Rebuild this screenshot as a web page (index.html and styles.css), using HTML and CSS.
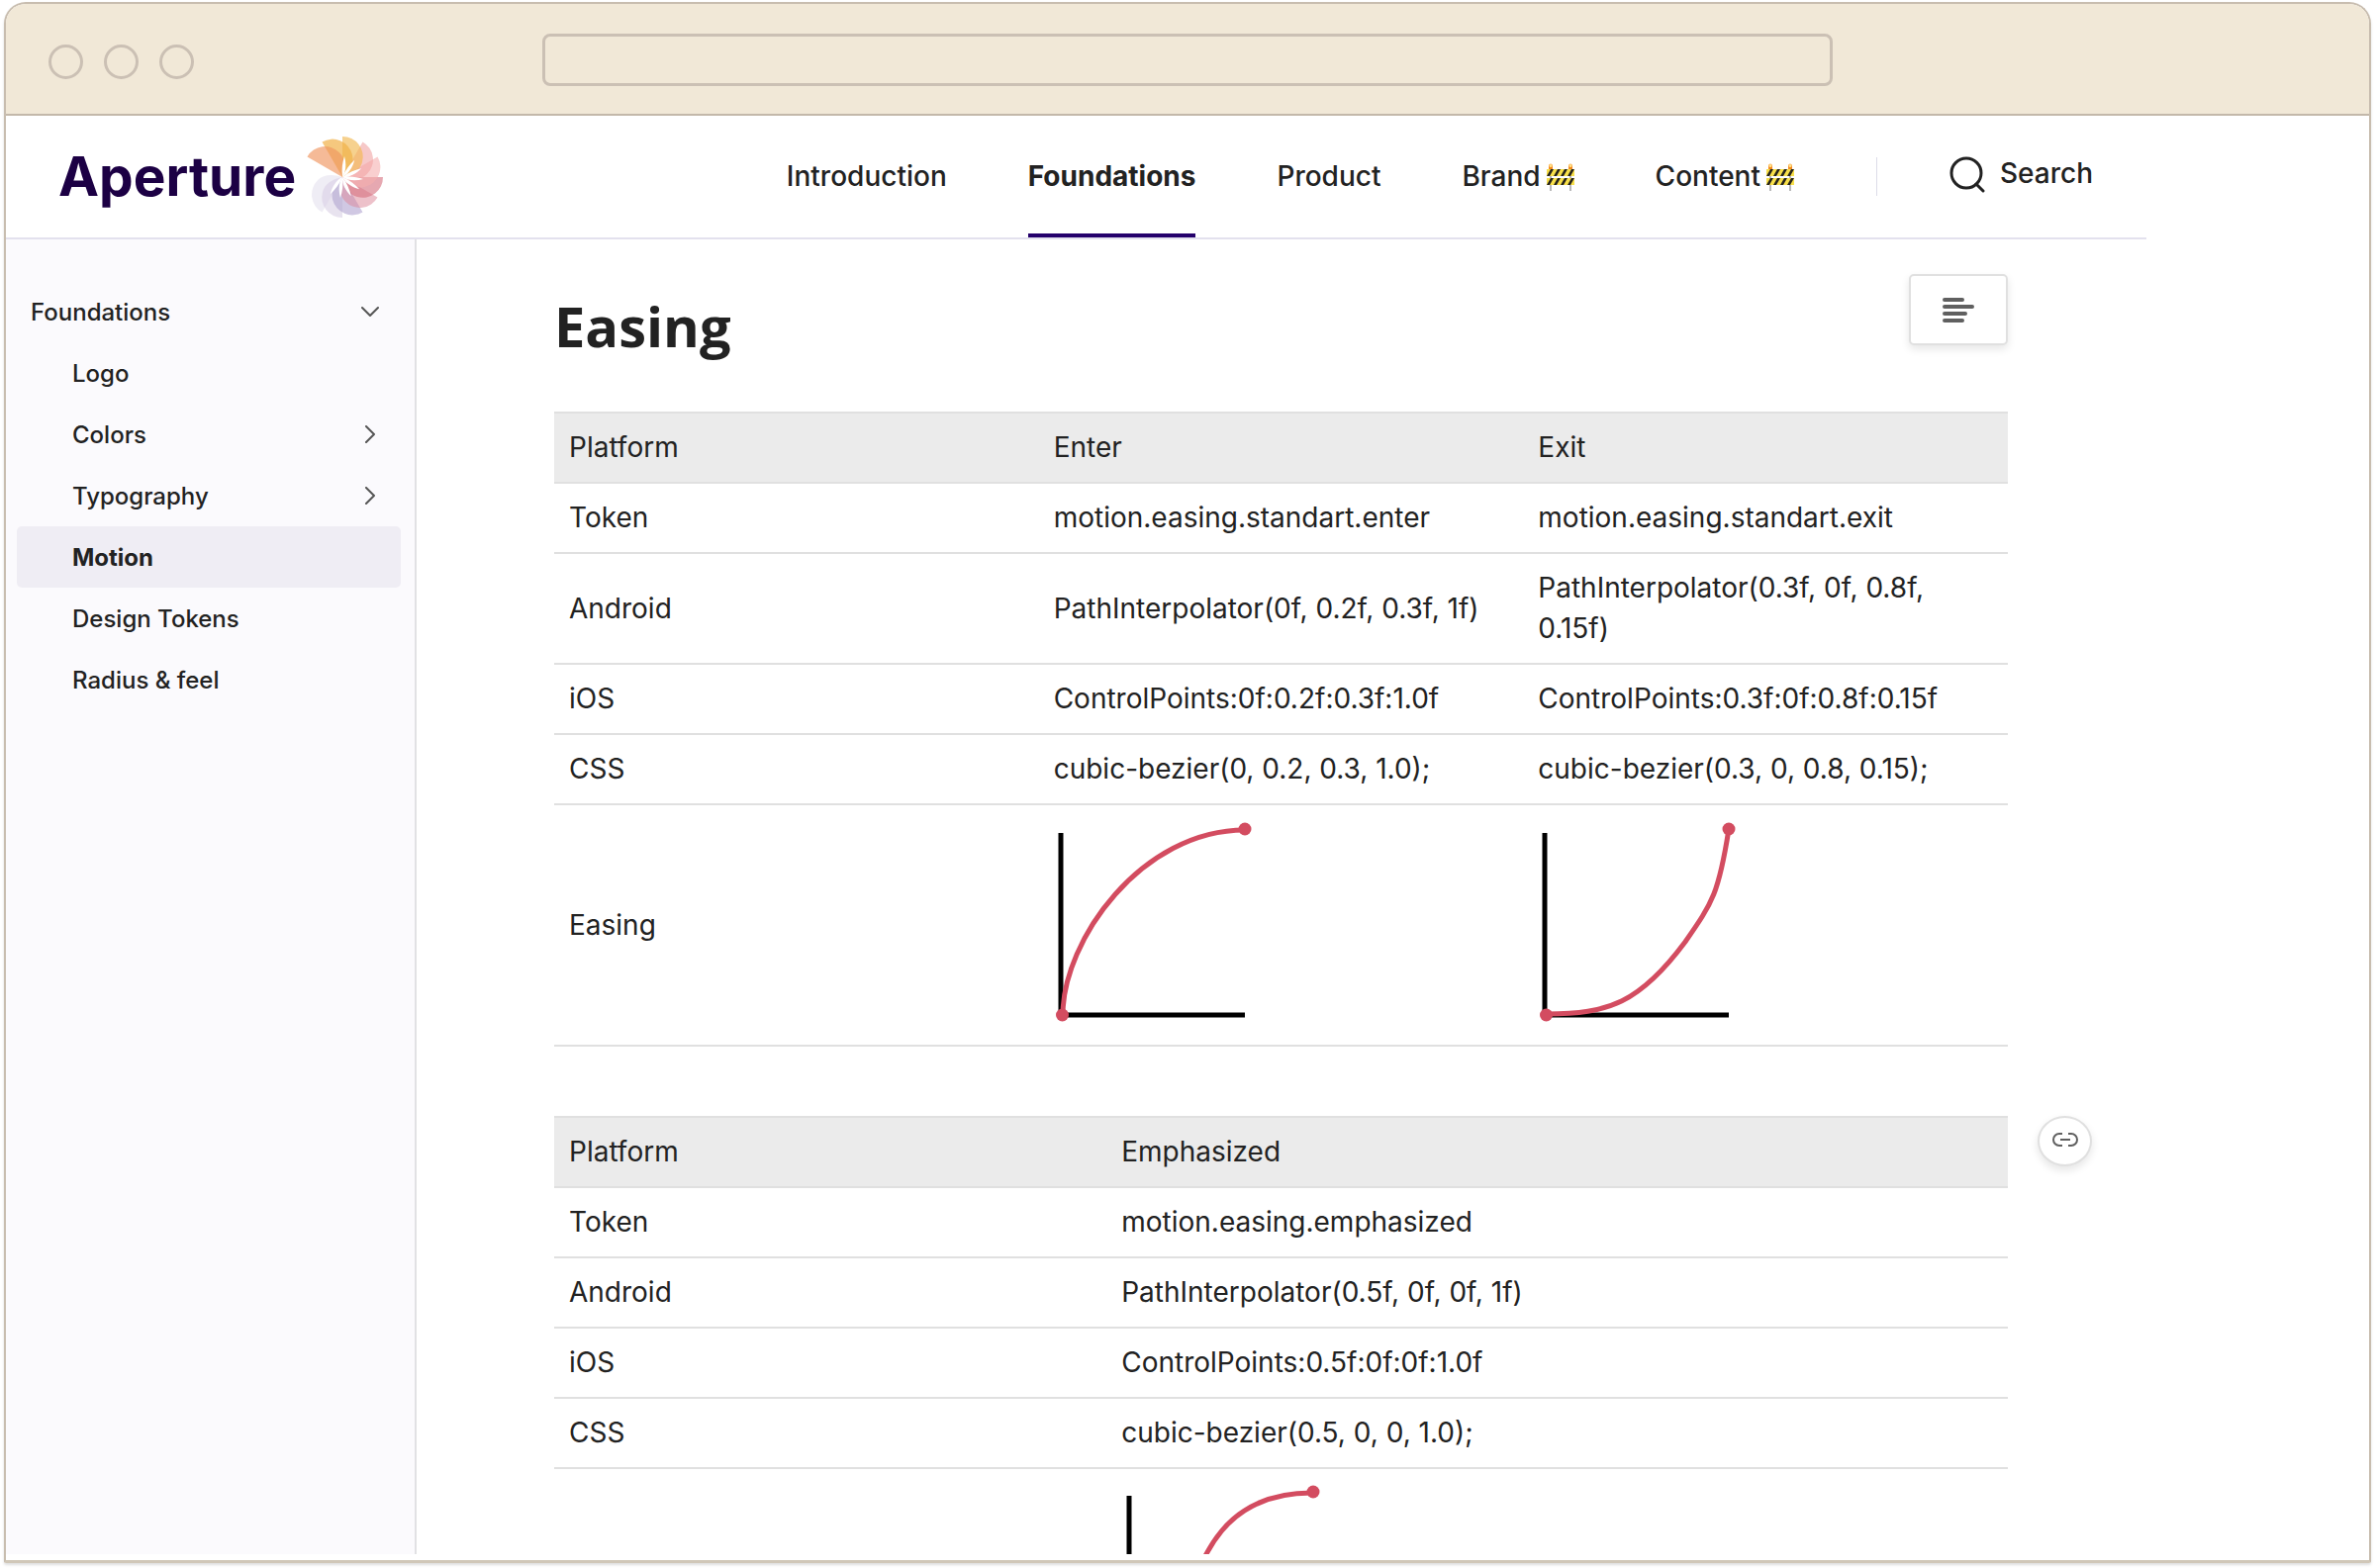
FILE: index.html
```html
<!DOCTYPE html>
<html lang="en">
<head>
<meta charset="utf-8">
<title>Aperture – Motion</title>
<link rel="stylesheet" href="styles.css">
</head>
<body>
<svg class="defs" aria-hidden="true">
  <defs>
    <path id="petal" d="M0 0V-41A20.5 20.5 0 0 1 20 -15C18 -7 10 -2 0 0Z"/>
    <path id="slit" d="M0 0C-1 -8 0 -15 2 -21C4 -14 4 -6 0 0Z"/>
    <pattern id="stripes" width="7" height="16" patternUnits="userSpaceOnUse">
      <rect width="7" height="16" fill="#f8e04a"/>
      <path d="M0 7L4 0H7L3 7ZM0 16L4 9H7L3 16Z" fill="#27241c"/>
    </pattern>
    <symbol id="barrier" viewBox="0 0 28 28">
      <path d="M4 6V28M24 6V28" stroke="#b9b9bb" stroke-width="2"/>
      <path d="M2 6L2 2Q4 -1 6 2L6 6ZM22 6L22 2Q24 -1 26 2L26 6Z" fill="#f58a1f"/>
      <circle cx="4" cy="2.500" r="1.500" fill="#ffe58a"/><circle cx="24" cy="2.500" r="1.500" fill="#ffe58a"/>
      <g transform="translate(0 6)">
        <rect width="28" height="7" fill="url(#stripes)"/>
        <rect y="9" width="28" height="7" fill="url(#stripes)"/>
      </g>
    </symbol>
    <symbol id="chevron" viewBox="0 0 18 18">
      <path d="M5 1L13 9L5 17" fill="none" stroke="#555" stroke-width="2" stroke-linecap="round" stroke-linejoin="round"/>
    </symbol>
  </defs>
</svg>
<div class="window">
  <div class="titlebar">
    <div class="lights"><span></span><span></span><span></span></div>
    <input class="address" type="text" aria-label="Address">
  </div>
  <div class="site">
    <header class="header">
      <a class="brand" href="#">
        <span>Aperture</span>
        <svg class="mark" viewBox="-38 -43 80 86" aria-hidden="true">
          <g opacity=".9">
            <use href="#petal" transform="rotate(210)" fill="#ece9f3" opacity=".9"/>
            <use href="#petal" transform="rotate(180)" fill="#d5cce3" opacity=".6"/>
            <use href="#petal" transform="rotate(150)" fill="#a99bcb" opacity=".6"/>
            <use href="#petal" transform="rotate(120)" fill="#d9788c" opacity=".5"/>
            <use href="#petal" transform="rotate(90)" fill="#d25f70" opacity=".6"/>
            <use href="#petal" transform="rotate(60)" fill="#f5a6a6" opacity=".6"/>
            <use href="#petal" transform="rotate(30)" fill="#f09a9a" opacity=".6"/>
            <use href="#petal" fill="#f1b03f" opacity=".65"/>
            <use href="#petal" transform="rotate(-30)" fill="#efaa35" opacity=".7"/>
            <use href="#petal" transform="rotate(-60)" fill="#ee8a4e" opacity=".65"/>
          </g>
          <g fill="#fff">
            <use href="#slit"/>
            <use href="#slit" transform="rotate(30)"/>
            <use href="#slit" transform="rotate(60)"/>
            <use href="#slit" transform="rotate(90)"/>
            <use href="#slit" transform="rotate(120)"/>
            <use href="#slit" transform="rotate(150)"/>
            <use href="#slit" transform="rotate(180)"/>
            <use href="#slit" transform="rotate(210)"/>
          </g>
        </svg>
      </a>
      <nav class="nav">
        <a href="#">Introduction</a>
        <a href="#" class="current">Foundations</a>
        <a href="#">Product</a>
        <a href="#">Brand <svg class="emoji" role="img" aria-label="under construction"><use href="#barrier"/></svg></a>
        <a href="#">Content <svg class="emoji" role="img" aria-label="under construction"><use href="#barrier"/></svg></a>
      </nav>
      <button class="search" type="button">
        <svg viewBox="0 0 38 38" aria-hidden="true"><circle cx="18" cy="18" r="15"/><path d="M28 29L35 36"/></svg>
        Search
      </button>
    </header>
    <div class="columns">
      <aside class="sidebar">
        <a class="item top" href="#">Foundations <svg class="chevron down"><use href="#chevron"/></svg></a>
        <a class="item" href="#">Logo</a>
        <a class="item" href="#">Colors <svg class="chevron"><use href="#chevron"/></svg></a>
        <a class="item" href="#">Typography <svg class="chevron"><use href="#chevron"/></svg></a>
        <a class="item active" href="#">Motion</a>
        <a class="item" href="#">Design Tokens</a>
        <a class="item" href="#">Radius &amp; feel</a>
      </aside>
      <main class="content">
        <div class="heading">
          <h1>Easing</h1>
          <button class="toc" type="button" aria-label="On this page">
            <svg viewBox="0 0 32 26"><path d="M2 3H20M2 10H30M2 17H23M2 24H20"/></svg>
          </button>
        </div>
        <table class="tokens">
          <thead><tr><th>Platform</th><th>Enter</th><th>Exit</th></tr></thead>
          <tbody>
            <tr><td>Token</td><td>motion.easing.standart.enter</td><td>motion.easing.standart.exit</td></tr>
            <tr><td>Android</td><td>PathInterpolator(0f, 0.2f, 0.3f, 1f)</td><td>PathInterpolator(0.3f, 0f, 0.8f, 0.15f)</td></tr>
            <tr><td>iOS</td><td>ControlPoints:0f:0.2f:0.3f:1.0f</td><td>ControlPoints:0.3f:0f:0.8f:0.15f</td></tr>
            <tr><td>CSS</td><td>cubic-bezier(0, 0.2, 0.3, 1.0);</td><td>cubic-bezier(0.3, 0, 0.8, 0.15);</td></tr>
            <tr>
              <td>Easing</td>
              <td><svg class="graph" viewBox="1 -2 214 214"><path class="axis" d="M8 12V196H194"/><path class="curve" d="M10 196C10 120 90 9 194 9"/><circle cx="9.500" cy="196" r="6.500"/><circle cx="194" cy="8" r="6.500"/></svg></td>
              <td><svg class="graph" viewBox="1 -2 214 214"><path class="axis" d="M8 12V196H194"/><path class="curve" d="M10 195C72 195 104 184 150 122C178 82 184 72 194 8"/><circle cx="9.500" cy="196" r="6.500"/><circle cx="194" cy="8" r="6.500"/></svg></td>
            </tr>
          </tbody>
        </table>
        <section class="linked">
          <table class="tokens wide">
            <thead><tr><th>Platform</th><th>Emphasized</th></tr></thead>
            <tbody>
              <tr><td>Token</td><td>motion.easing.emphasized</td></tr>
              <tr><td>Android</td><td>PathInterpolator(0.5f, 0f, 0f, 1f)</td></tr>
              <tr><td>iOS</td><td>ControlPoints:0.5f:0f:0f:1.0f</td></tr>
              <tr><td>CSS</td><td>cubic-bezier(0.5, 0, 0, 1.0);</td></tr>
              <tr>
                <td></td>
                <td><svg class="graph" viewBox="0 -1 214 214"><path class="axis" d="M8 12V196H194"/><path class="curve" d="M10 195C85 195 40 8 194 9"/><circle cx="9.500" cy="196" r="6.500"/><circle cx="194" cy="8" r="6.500"/></svg></td>
              </tr>
            </tbody>
          </table>
          <button class="link" type="button" aria-label="Copy link">
            <svg viewBox="0 0 28 16"><path d="M11 2H8A6 6 0 0 0 8 14H11M17 2H20A6 6 0 0 1 20 14H17M9 8H19"/></svg>
          </button>
        </section>
      </main>
    </div>
  </div>
</div>
</body>
</html>
```

FILE: styles.css
```css
* { box-sizing: border-box; }

body {
  margin: 0;
  background: #fff;
  color: #222;
  font: 400 28px/41px Inter, sans-serif;
}

a { color: inherit; text-decoration: none; }
button { padding: 0; font: inherit; color: inherit; cursor: pointer; }
.defs { position: absolute; width: 0; height: 0; }

.window {
  display: flex;
  flex-direction: column;
  height: calc(100vh - 7px);
  margin: 2px 4px 5px;
  padding-bottom: 6px;
  overflow: hidden;
  border: 2px solid #c8bdaf;
  border-bottom: 3px solid #d0c7b8;
  border-radius: 22px 22px 2px 2px;
  box-shadow: 0 2px 3px #0002;
}

.titlebar {
  display: grid;
  grid-template-columns: 1fr 1304px 1fr;
  align-items: center;
  flex: none;
  height: 113px;
  padding-top: 2px;
  background: #f1e8d7;
  border-bottom: 2px solid #c3b8aa;
}
.lights { display: flex; gap: 21px; padding-left: 43px; padding-top: 4px; }
.lights span { width: 35px; height: 35px; border: 3px solid #cbc0b4; border-radius: 50%; }
.address {
  height: 53px;
  border: 3px solid #cbc0b4;
  border-radius: 8px;
  background: transparent;
  font: inherit;
}

.site { display: flex; flex-direction: column; flex: 1; min-height: 0; overflow: hidden; }

.header {
  display: flex;
  align-items: stretch;
  flex: none;
  height: 125px;
  margin-right: 225px;
  padding: 0 54px 0 53px;
  border-bottom: 2px solid #e3e1ee;
}
.brand { display: flex; align-items: center; gap: 9px; margin-right: auto; color: #1c0044; font-weight: 700; font-size: 55px; }
.mark { width: 80px; height: 86px; }
.nav { display: flex; gap: 82px; font-weight: 500; }
.nav a { display: flex; align-items: center; gap: 6px; border-bottom: 4px solid transparent; border-top: 4px solid transparent; }
.nav .current { font-weight: 700; border-bottom-color: #24006b; }
.emoji { width: 28px; height: 28px; }
.search {
  display: flex;
  align-items: center;
  align-self: center;
  gap: 14px;
  height: 39px;
  margin-left: 83px;
  padding: 0 0 6px 72px;
  border: 0;
  border-left: 1px solid #dcdce8;
  background: none;
  font-weight: 500;
}
.search svg { width: 38px; height: 38px; fill: none; stroke: #222; stroke-width: 3; stroke-linecap: round; }

.columns { display: grid; grid-template-columns: 415px minmax(0, 1fr); flex: 1; min-height: 0; }
.sidebar {
  padding: 42px 14px 0 11px;
  background: #fbfafd;
  border-right: 2px solid #e1e1e4;
  font-size: 24px;
  font-weight: 500;
}
.item { display: flex; align-items: center; justify-content: space-between; height: 62px; padding: 0 22px 0 56px; border-radius: 5px; }
.item.top { padding-left: 14px; }
.item.active { background: #efedf4; font-weight: 700; }
.chevron { width: 18px; height: 18px; }
.chevron.down { transform: rotate(90deg); }

.content { padding: 35px 365px 0 139px; }
.heading { display: flex; justify-content: space-between; align-items: flex-start; height: 139px; }
h1 { margin: 0; font: 700 56px/104px "Open Sans", sans-serif; }
.toc {
  display: grid;
  place-items: center;
  width: 100px;
  height: 72px;
  border: 2px solid #e0e0e0;
  border-radius: 5px;
  background: #fff;
  box-shadow: 0 4px 8px #0000001a;
}
.toc svg { width: 32px; height: 26px; fill: none; stroke: #606060; stroke-width: 4; stroke-linecap: round; }

.tokens { width: 100%; table-layout: fixed; border-collapse: collapse; }
.tokens th, .tokens td { padding: 14px 15px; border-bottom: 2px solid #e0e0e0; text-align: left; font-weight: 400; }
.tokens th { background: #ebebeb; border-top: 2px solid #e0e0e0; }
.wide th:first-child { width: 38%; }
.graph { display: block; width: 214px; height: 214px; fill: #d34c60; }
.graph path { fill: none; stroke-width: 5; }
.axis { stroke: #000; }
.curve { stroke: #d34c60; }

.linked { display: flex; align-items: flex-start; gap: 30px; margin-top: 70px; margin-right: -85px; }
.link {
  display: grid;
  place-items: center;
  flex: none;
  width: 55px;
  height: 51px;
  padding-bottom: 3px;
  border: 2px solid #e0e0e0;
  border-radius: 50%;
  background: #fff;
  box-shadow: 0 4px 8px #0000001a;
}
.link svg { width: 28px; height: 16px; fill: none; stroke: #606060; stroke-width: 2; }
```
